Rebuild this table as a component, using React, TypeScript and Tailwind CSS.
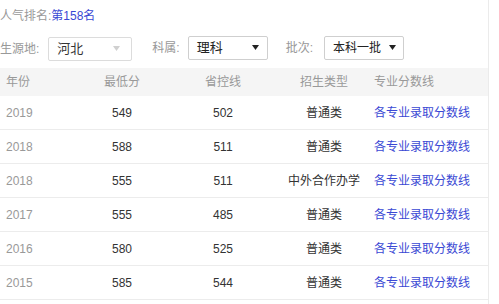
import React from "react";

const rows = [
  ["2019", "549", "502", "普通类"],
  ["2018", "588", "511", "普通类"],
  ["2018", "555", "511", "中外合作办学"],
  ["2017", "555", "485", "普通类"],
  ["2016", "580", "525", "普通类"],
  ["2015", "585", "544", "普通类"],
];

function Arrow({ light }: { light?: boolean }) {
  return (
    <svg width="7" height="5" viewBox="0 0 7 5" className="shrink-0">
      <path d="M0 0 L7 0 L3.5 5 Z" fill={light ? "#d0d0d0" : "#222"} />
    </svg>
  );
}

export default function App() {
  return (
    <div
      className="w-[499px] h-[304px] bg-white overflow-hidden text-[12px]"
      style={{ fontFamily: '"Liberation Sans", "Noto Sans CJK SC", sans-serif' }}
    >
      <div className="w-[489px] h-full border-r border-[#ebebeb]">
        <div className="h-[31px] flex items-center leading-none">
          <span className="text-[#999]">人气排名:</span>
          <span className="text-[#3a48d4]">第158名</span>
        </div>
        <div className="h-[33px] flex items-center leading-none">
          <span className="text-[#999] text-[12px] mt-[2px]">生源地:</span>
          <div className="ml-[9px] mt-[2px] w-[84px] h-[24px] border border-[#dcdcdc] rounded-[2px] flex items-center justify-between pl-[8px] pr-[11px]">
            <span className="text-[#333] text-[13px]">河北</span>
            <Arrow light />
          </div>
          <span className="ml-[20px] text-[#999]">科属:</span>
          <div className="ml-[8px] w-[80px] h-[24px] border border-[#cfcfcf] rounded-[2px] flex items-center justify-between pl-[8px] pr-[8px]">
            <span className="text-[#222] text-[13px]">理科</span>
            <Arrow />
          </div>
          <span className="ml-[18px] text-[#999]">批次:</span>
          <div className="ml-[11px] w-[80px] h-[24px] border border-[#cfcfcf] rounded-[2px] flex items-center justify-between pl-[8px] pr-[7px]">
            <span className="text-[#222] text-[12px]">本科一批</span>
            <Arrow />
          </div>
        </div>
        <div className="mt-[4px] h-[28px] bg-[#f5f5f5] grid grid-cols-[72px_100px_102px_100px_1fr] items-center text-[#999] leading-none">
          <span className="pl-[6px]">年份</span>
          <span className="text-center">最低分</span>
          <span className="text-center">省控线</span>
          <span className="text-center">招生类型</span>
          <span>专业分数线</span>
        </div>
        {rows.map((r, i) => (
          <div
            key={i}
            className="h-[34px] border-b border-[#ececec] grid grid-cols-[72px_100px_102px_100px_1fr] items-center leading-none"
          >
            <span className="pl-[6px] text-[#999]">{r[0]}</span>
            <span className="text-center text-[#333]">{r[1]}</span>
            <span className="text-center text-[#333]">{r[2]}</span>
            <span className="text-center text-[#333]">{r[3]}</span>
            <span className="text-[#3a48d4]">各专业录取分数线</span>
          </div>
        ))}
      </div>
    </div>
  );
}
